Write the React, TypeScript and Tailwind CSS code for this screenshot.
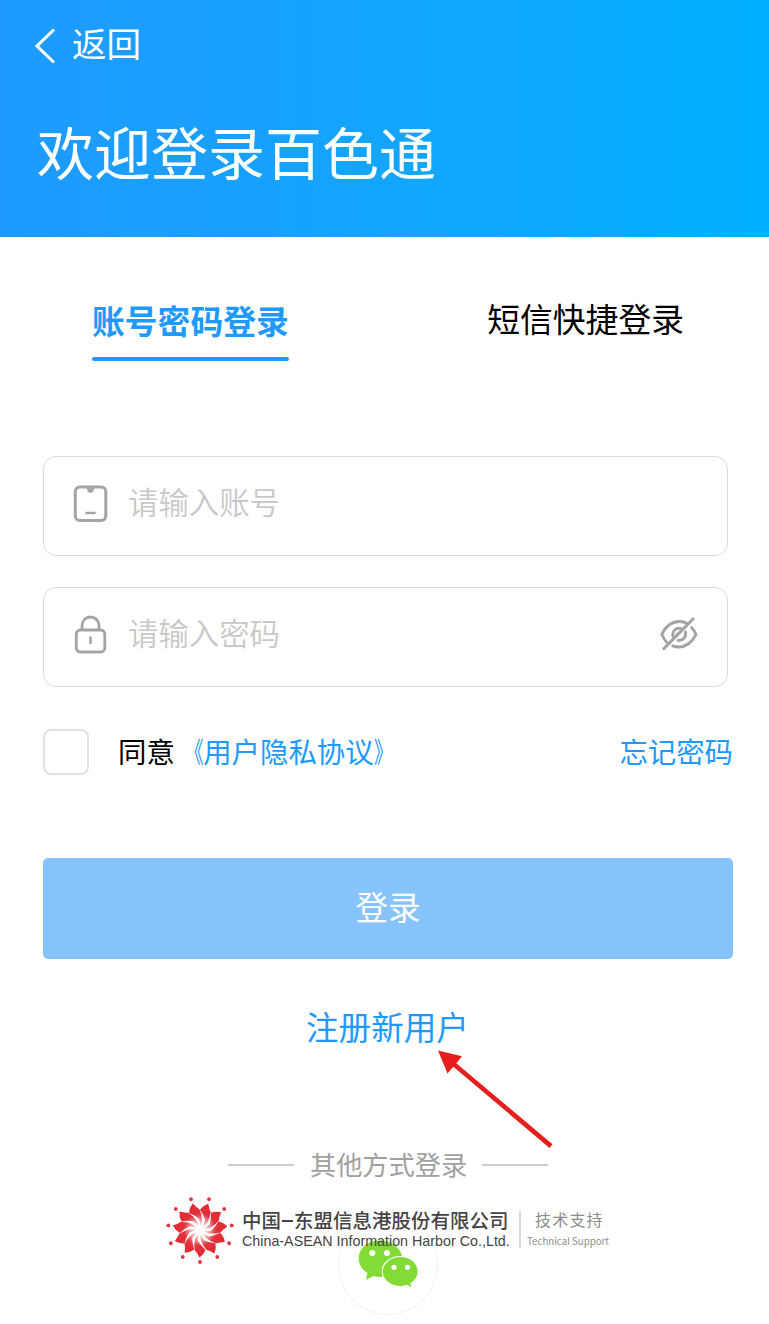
import React from "react";

const petals = Array.from({ length: 11 }, (_, i) => (i * 360) / 11);

function HarborLogo() {
  return (
    <svg className="h-[68px] w-[70px] shrink-0" viewBox="-35 -33 70 68">
      <defs>
        <radialGradient id="petal" gradientUnits="userSpaceOnUse" cx="0" cy="0" r="27">
          <stop offset="0" stopColor="#fff" />
          <stop offset="0.13" stopColor="#fff" />
          <stop offset="0.35" stopColor="#f3a0a3" />
          <stop offset="0.6" stopColor="#e2323c" />
          <stop offset="1" stopColor="#e2282f" />
        </radialGradient>
      </defs>
      {petals.map((a) => (
        <g key={a} transform={`rotate(${a})`}>
          <path
            d="M0 0Q-7.700 7.900-5.800 19.500Q-3 22.500-0.500 27.500Q4 24.500 5.800 19.500Q1 16-2.200 10.800Q-2.500 5 0 0Z"
            fill="url(#petal)"
          />
          <path d="M0 0Q-7.700 7.900-5.800 20" fill="none" stroke="#fff" strokeWidth="0.900" />
          <circle cx="0" cy="32" r="1.900" fill="#e3333b" />
        </g>
      ))}
    </svg>
  );
}

function WechatIcon() {
  return (
    <svg className="h-[50px] w-[62px]" viewBox="358 1240 62 50" fill="#83db35">
      <path d="M380 1240.500C368 1240.500 358.800 1248 358.800 1258.500C358.800 1264.500 362 1269.500 367.500 1273L366 1280L373.500 1276C377 1277 380 1277.300 384 1277C380 1266 389 1255.500 402 1256C400 1247 391 1240.500 380 1240.500Z" />
      <path d="M400.500 1256.500C390.500 1256.500 382.300 1263 382.300 1271.700C382.300 1280 390.500 1286.500 400.500 1286.500C403 1286.500 405.200 1286 407.500 1285.300L412 1289L411 1283.500C415.500 1280.500 418.200 1276.500 418.200 1271.700C418.200 1263 410.500 1256.500 400.500 1256.500Z" stroke="#fff" strokeWidth="1.200" />
      <g fill="#fff">
        <circle cx="372.300" cy="1253" r="3" />
        <circle cx="387" cy="1253" r="3" />
        <circle cx="394" cy="1267.300" r="2.600" />
        <circle cx="407.500" cy="1267.300" r="2.600" />
      </g>
    </svg>
  );
}

export default function App() {
  return (
    <div className="relative h-[1324px] w-[769px] overflow-hidden bg-white font-['Noto_Sans_CJK_SC',sans-serif] text-black">
      <header className="h-[237px] bg-linear-to-r from-[#1e9aff] to-[#00b0ff] text-white">
        <div className="flex h-[84px] items-center pl-[34px]">
          <svg className="mt-[7px] h-9 w-6" viewBox="0 0 24 36" fill="none" stroke="currentColor" strokeWidth="3.100">
            <path d="M20 1.500L3 18L20 34.500" />
          </svg>
          <span className="ml-[14px] text-[34.500px] leading-[48px]">返回</span>
        </div>
        <h1 className="pt-[26px] pl-[37px] text-[57px] leading-[80px]">欢迎登录百色通</h1>
      </header>

      <nav className="flex justify-between pt-[57px] pr-[85px] pl-[92px] text-[32.800px] leading-[48px]">
        <div>
          <div className="pt-[2px] font-bold text-[#1e9aff]">账号密码登录</div>
          <div className="mt-[13px] h-1 rounded-full bg-[#1e9aff]" />
        </div>
        <div>短信快捷登录</div>
      </nav>

      <main className="pl-[43px]">
        <div className="mt-[95px] flex h-[100px] w-[685px] items-center rounded-[13px] border border-[#dcdcdc] pl-[29px]">
          <svg className="mb-[5px] h-[38px] w-[35px]" viewBox="0 0 35 38" fill="none" stroke="#a4a4a4" strokeWidth="3">
            <rect x="2.300" y="2" width="30.500" height="33.500" rx="4.500" />
            <path d="M13.500 2.500H21.500L20.300 6.500Q17.500 9.300 14.700 6.500Z" fill="#a4a4a4" stroke="none" />
            <path d="M13.500 28H21.500" strokeLinecap="round" strokeWidth="2.600" />
          </svg>
          <span className="mb-[10px] ml-[20px] text-[30.400px] leading-[44px] font-[350] text-[#c8c8c8]">请输入账号</span>
        </div>

        <div className="mt-[31px] flex h-[100px] w-[685px] items-center rounded-[13px] border border-[#dcdcdc] pr-[29px] pl-[29px]">
          <svg className="mb-[5px] h-[40px] w-[35px]" viewBox="0 0 35 40" fill="none" stroke="#a4a4a4" strokeWidth="2.800">
            <rect x="3.300" y="15" width="28.500" height="22" rx="4" />
            <path d="M9.100 15V10.500C9.100 5.500 12.800 2 17.500 2S26 5.500 26 10.500V15" />
            <path d="M17.500 22.500V28" strokeLinecap="round" strokeWidth="2.600" />
          </svg>
          <span className="mb-[10px] ml-[20px] text-[30.400px] leading-[44px] font-[350] text-[#c8c8c8]">请输入密码</span>
          <svg className="mb-[6px] ml-auto h-[34px] w-[38px]" viewBox="0 0 38 34" fill="none" stroke="#a4a4a4" strokeWidth="2.900" strokeLinecap="round">
            <path d="M6.500 25Q3.500 21.500 1.800 17.500Q7.500 5 19 4.500Q23.500 4.300 27 6.300" />
            <path d="M31.500 10.500Q34.500 13.500 36 17.500Q30 29.500 19 30Q15.500 30 12.800 28.800" />
            <path d="M13.500 20.500C11 15 16 9.500 22 12" />
            <path d="M25.500 15C26.500 20 23 24 18 23.500" />
            <path d="M16.500 19.500Q16.500 16 20 15.500" strokeWidth="2" />
            <path d="M4 31.500L33 2" strokeWidth="3.200" />
          </svg>
        </div>

        <div className="mt-[42px] flex h-[46px] w-[690px] items-center text-[28.400px] leading-[46px]">
          <div className="size-[46px] rounded-[8px] border-2 border-[#e1e1e1]" />
          <span className="mb-[3px] ml-[29px]">同意</span>
          <span className="mb-[3px] text-[#1e9aff]">
            <span className="inline-block origin-right scale-x-66">《</span>用户隐私协议<span className="inline-block origin-left scale-x-66">》</span>
          </span>
          <span className="mb-[3px] ml-auto text-[#1e9aff]">忘记密码</span>
        </div>

        <button className="mt-[83px] block h-[101px] w-[690px] rounded-[5px] bg-[#87c4fd] pb-[6px] text-[32.500px] leading-[48px] text-white">
          登录
        </button>
      </main>

      <div className="mt-[43px] pl-[306px] text-[32.600px] leading-[48px] text-[#1e9aff]">注册新用户</div>

      <div className="mt-[96px] flex h-[38px] items-center pl-[228px] text-[26.200px] leading-[38px] text-[#a0a0a0]">
        <span className="h-[2px] w-[66px] bg-[#ccc]" />
        <span className="mr-[15px] mb-[2px] ml-[16px]">其他方式登录</span>
        <span className="h-[2px] w-[66px] bg-[#ccc]" />
      </div>

      <svg className="absolute top-[1045px] left-[432px] h-[108px] w-[126px]" viewBox="432 1045 126 108" fill="#e61e1e">
        <path d="M438 1050.500L462 1056.300L456.300 1063.200L552.500 1144.300L549.500 1148L453.300 1066.700L447.500 1073.500Z" />
      </svg>

      <div className="absolute top-[1215px] left-[338px] flex size-[100px] justify-center rounded-full border border-[#f0f0f0] pt-[24px] pl-[2px]">
        <WechatIcon />
      </div>

      <footer className="relative mt-[13px] flex pl-[165px]">
        <HarborLogo />
        <div className="ml-[7px] w-[270px] pt-[10px] whitespace-nowrap text-[#454345]">
          <div className="flex items-center text-[19.500px] leading-[26px] font-medium">
            中国
            <span className="mx-[1px] mt-[2px] h-[2px] w-[11px] bg-[#454345]" />
            东盟信息港股份有限公司
          </div>
          <div className="font-['Liberation_Sans',sans-serif] text-[14.300px] leading-[16px]">China-ASEAN Information Harbor Co.,Ltd.</div>
        </div>
        <div className="mt-[14px] ml-[7px] h-[37px] w-[2px] bg-[#dadada]" />
        <div className="ml-[6px] w-[83px] pt-[9px] whitespace-nowrap text-[#8c8c8c]">
          <div className="pl-[8px] text-[16px] leading-[26px] tracking-[1.200px]">技术支持</div>
          <div className="pt-px text-[9.700px] leading-[17px]">Technical Support</div>
        </div>
      </footer>
    </div>
  );
}
